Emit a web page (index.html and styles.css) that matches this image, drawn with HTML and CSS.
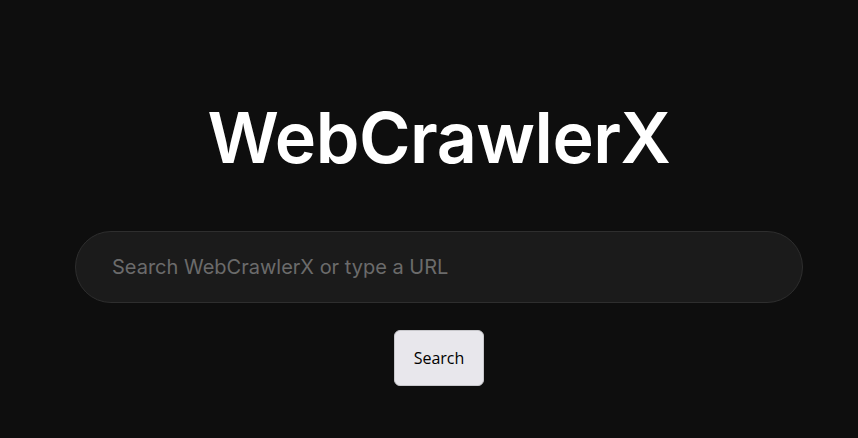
FILE: index.html
```html
<!DOCTYPE html>
<html lang="en">
<head>
    <meta charset="UTF-8">
    <meta name="viewport" content="width=device-width, initial-scale=1.0">
    <title>WebCrawlerX</title>
    <link rel="stylesheet" href="styles.css">
</head>
<body>
    <main class="container">
        <h1 class="logo">WebCrawlerX</h1>
        <form class="search-form">
            <input type="text" class="search-input" placeholder="Search WebCrawlerX or type a URL">
            <button type="submit" class="search-button">Search</button>
        </form>
    </main>
</body>
</html>
```

FILE: styles.css
```css
html, body {
    height: 100%;
}
body {
    margin: 0;
    background-color: #0e0e0e;
    font-family: Inter, "Liberation Sans", sans-serif;
    color: #fff;
}
.container {
    display: flex;
    flex-direction: column;
    align-items: center;
    padding: 95px 0 0 20px;
}
.logo {
    margin: 0;
    font-size: 70px;
    font-weight: 600;
    line-height: 86px;
    letter-spacing: -0.5px;
}
.search-form {
    display: flex;
    flex-direction: column;
    align-items: center;
    margin-top: 50px;
}
.search-input {
    box-sizing: border-box;
    width: 728px;
    height: 72px;
    padding: 0 36px;
    background-color: #1b1b1b;
    border: 1px solid #2e2e2e;
    border-radius: 36px;
    color: #ddd;
    font-family: Inter, "Liberation Sans", sans-serif;
    font-size: 20px;
    outline: none;
}
.search-input::placeholder {
    color: #6b6b6b;
}
.search-button {
    margin-top: 27px;
    width: 90px;
    height: 56px;
    background-color: #e8e7ec;
    color: #000;
    border: 1px solid #c8c8cc;
    border-radius: 6px;
    font-family: "Open Sans", sans-serif;
    font-size: 16px;
    cursor: pointer;
}
```
